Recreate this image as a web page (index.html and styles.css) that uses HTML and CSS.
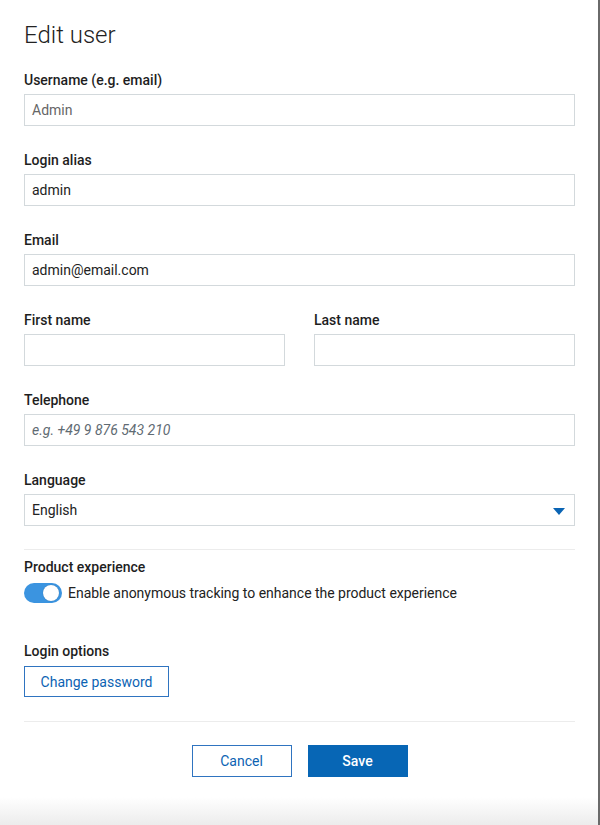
FILE: index.html
```html
<!DOCTYPE html>
<html>
<head>
<meta charset="utf-8">
<link rel="stylesheet" href="styles.css">
</head>
<body>
<div class="dialog">
  <h1 class="title">Edit user</h1>
  <div class="field">
    <label class="label">Username (e.g. email)</label>
    <div class="input disabled">Admin</div>
  </div>
  <div class="field">
    <label class="label">Login alias</label>
    <div class="input">admin</div>
  </div>
  <div class="field">
    <label class="label">Email</label>
    <div class="input">admin@email.com</div>
  </div>
  <div class="row">
    <div class="field">
      <label class="label">First name</label>
      <div class="input"></div>
    </div>
    <div class="field">
      <label class="label">Last name</label>
      <div class="input"></div>
    </div>
  </div>
  <div class="field">
    <label class="label">Telephone</label>
    <div class="input placeholder">e.g. +49 9 876 543 210</div>
  </div>
  <div class="field last">
    <label class="label">Language</label>
    <div class="input select">English
      <svg class="caret" width="12" height="7" viewBox="0 0 12 7"><path d="M0 0h12L6 7z" fill="#0a64b4"/></svg>
    </div>
  </div>
  <hr class="divider">
  <div class="section">
    <div class="label">Product experience</div>
    <div class="toggle-row">
      <span class="toggle"><span class="knob"></span></span>
      <span class="toggle-text">Enable anonymous tracking to enhance the product experience</span>
    </div>
  </div>
  <div class="section login">
    <div class="label">Login options</div>
    <button class="btn outline small">Change password</button>
  </div>
  <hr class="divider bottom">
  <div class="actions">
    <button class="btn outline wide">Cancel</button>
    <button class="btn primary wide">Save</button>
  </div>
  <div class="shade"></div>
</div>
</body>
</html>
```
FILE: styles.css
```css
html, body {
  margin: 0;
  padding: 0;
  background: #fff;
}
body {
  width: 600px;
  height: 825px;
  overflow: hidden;
  font-family: Roboto, "Liberation Sans", sans-serif;
  color: #1e1e1e;
}
.dialog {
  position: relative;
  box-sizing: border-box;
  width: 600px;
  height: 825px;
  padding: 19px 23px 0 24px;
  border-right: 2px solid #6a6a6a;
  background: #fff;
}
.title {
  margin: 0 0 19px;
  font-size: 24px;
  line-height: 32px;
  font-weight: 300;
  color: #222;
}
.field {
  display: flex;
  flex-direction: column;
  margin-bottom: 24px;
}
.field.last {
  margin-bottom: 23px;
}
.label {
  display: block;
  font-size: 14px;
  line-height: 20px;
  font-weight: 500;
  color: #1e1e1e;
  margin-bottom: 4px;
}
.input {
  box-sizing: border-box;
  height: 32px;
  border: 1px solid #d3d9dc;
  padding: 0 7px;
  font-size: 14px;
  line-height: 30px;
  color: #222;
  background: #fff;
}
.input.disabled {
  color: #666;
}
.input.placeholder {
  color: #5f6b73;
  font-style: italic;
}
.select {
  display: flex;
  justify-content: space-between;
  align-items: center;
}
.caret {
  margin-right: 2px;
  margin-top: 2px;
}
.row {
  display: grid;
  grid-template-columns: 261px 261px;
  column-gap: 29px;
}
.divider {
  margin: 0;
  border: 0;
  border-top: 1px solid #ececec;
}
.section {
  padding-top: 7px;
}
.section .label {
  margin-bottom: 6px;
}
.toggle-row {
  display: flex;
  align-items: center;
  gap: 6px;
}
.toggle {
  position: relative;
  display: inline-block;
  width: 38px;
  height: 20px;
  border-radius: 10px;
  background: #3b94e0;
}
.knob {
  position: absolute;
  right: 3px;
  top: 2px;
  width: 16px;
  height: 16px;
  border-radius: 50%;
  background: #fff;
  box-shadow: 0 0 1px rgba(0,0,0,0.3);
}
.toggle-text {
  font-size: 14px;
  color: #222;
  letter-spacing: -0.02px;
}
.section.login {
  padding-top: 38px;
}
.section.login .label {
  margin-bottom: 5px;
}
.btn {
  box-sizing: border-box;
  font-family: Roboto, "Liberation Sans", sans-serif;
  font-size: 14px;
  cursor: pointer;
  background: #fff;
}
.btn.outline {
  border: 1px solid #2f74c0;
  color: #0c63b3;
}
.btn.small {
  width: 145px;
  height: 31px;
  padding: 0;
}
.divider.bottom {
  margin-top: 24px;
}
.actions {
  display: flex;
  justify-content: center;
  gap: 16px;
  padding-top: 23px;
}
.btn.wide {
  width: 100px;
  height: 32px;
  padding: 0;
}
.btn.primary {
  background: #0766b5;
  border: 1px solid #0766b5;
  color: #fff;
  font-weight: 500;
}
.shade {
  position: absolute;
  left: 0;
  right: 0;
  bottom: 0;
  height: 28px;
  background: linear-gradient(to bottom, rgba(235,235,235,0), #ececec);
}
```
